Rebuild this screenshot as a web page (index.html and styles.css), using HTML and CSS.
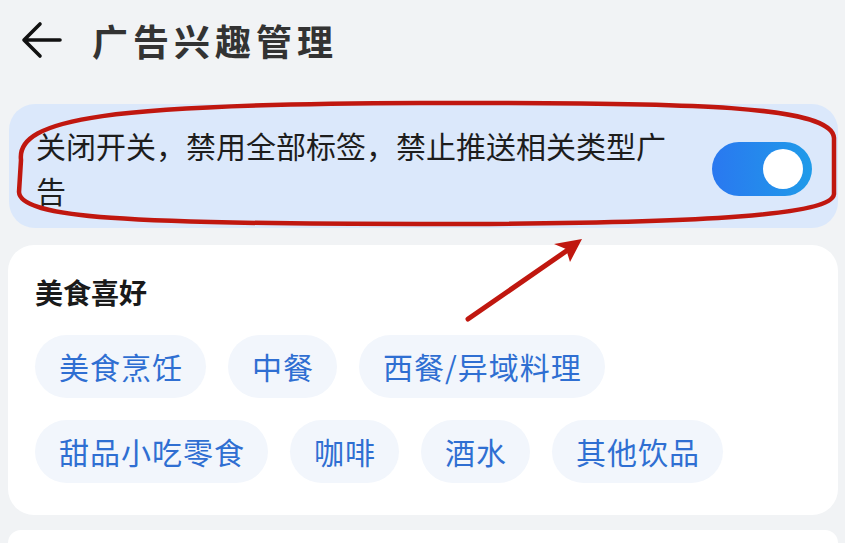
FILE: index.html
```html
<!DOCTYPE html>
<html lang="zh-CN">
    <head>
        <meta charset="utf-8">
        <title>广告兴趣管理</title>
        <link rel="stylesheet" href="styles.css">
    </head>
    <body>
        <header class="top-bar">
            <svg class="back" width="44" height="40" viewBox="0 0 44 40">
                <path d="M40 20 H5 M20 4 L4 20 L20 36" fill="none" stroke="#111" stroke-width="3.6" stroke-linecap="round" stroke-linejoin="round"/>
            </svg>
            <h1 class="title">广告兴趣管理</h1>
        </header>
        <main class="main">
            <div class="switch-card">
                <p class="switch-text">关闭开关，禁用全部标签，禁止推送相关类型广告</p>
                <div class="toggle"><div class="knob"></div></div>
            </div>
            <section class="tag-card">
                <h2 class="tag-title">美食喜好</h2>
                <ul class="chips">
                    <li>美食烹饪</li>
                    <li>中餐</li>
                    <li>西餐/异域料理</li>
                    <li>甜品小吃零食</li>
                    <li>咖啡</li>
                    <li>酒水</li>
                    <li>其他饮品</li>
                </ul>
            </section>
            <section class="tag-card next"></section>
        </main>
        <svg class="marks" width="845" height="543" viewBox="0 0 845 543">
            <path d="M21 160 C16 118, 110 104, 420 103 C700 102, 832 106, 834 138 L834 194 C832 214, 720 224, 420 224 C130 224, 20 218, 19 192 Z" fill="none" stroke="#c0170f" stroke-width="4.5"/>
            <path d="M468 319 L575 245" stroke="#c0170f" stroke-width="5" stroke-linecap="round"/>
            <path d="M582 239 L554 244 L566 249 L570 262 Z" fill="#c0170f"/>
        </svg>
    </body>
</html>
```

FILE: styles.css
```css
body {
    margin: 0;
    background: #f1f3f5;
    font-family: "Noto Sans CJK SC", "Noto Sans", sans-serif;
    color: #1d1d1d;
    height: 543px;
    overflow: hidden;
    position: relative;
}

.top-bar {
    display: flex;
    align-items: center;
    height: 80px;
    padding-left: 20px;
}

.back {
    margin-right: 28px;
}

.title {
    margin: 0;
    font-size: 36px;
    font-weight: 700;
    color: #333;
    letter-spacing: 5px;
}

.main {
    padding: 24px 7px 0 9px;
}

.switch-card {
    display: flex;
    align-items: center;
    background: #dbe8fb;
    border-radius: 26px;
    padding: 19px 26px 15px 27px;
}

.switch-text {
    margin: 0;
    flex: 1;
    font-size: 30px;
    line-height: 45px;
    padding-right: 40px;
}

.toggle {
    width: 100px;
    height: 54px;
    border-radius: 27px;
    background: linear-gradient(90deg, #2a78f0, #1f9be9);
    display: flex;
    align-items: center;
    justify-content: flex-end;
    padding-right: 9px;
    box-sizing: border-box;
    flex-shrink: 0;
    margin-top: 2px;
}

.knob {
    width: 40px;
    height: 40px;
    border-radius: 50%;
    background: #fff;
}

.tag-card {
    margin-top: 17px;
    background: #fff;
    border-radius: 26px;
    padding: 27px 20px 32px 27px;
    margin-left: -1px;
}

.tag-title {
    margin: 0 0 23px;
    font-size: 28px;
    line-height: 40px;
    font-weight: 700;
    color: #1a1a1a;
}

.chips {
    list-style: none;
    margin: 0;
    padding: 0;
    display: flex;
    flex-wrap: wrap;
    gap: 22px 22px;
}

.chips li {
    height: 63px;
    line-height: 63px;
    padding: 0 23px 0 24px;
    border-radius: 32px;
    background: #f2f6fc;
    color: #2f6fd2;
    font-size: 30px;
    letter-spacing: 1px;
}

.tag-card.next {
    height: 13px;
    margin-top: 15px;
    padding: 0;
    border-radius: 26px 26px 0 0;
}

.marks {
    position: absolute;
    left: 0;
    top: 0;
    pointer-events: none;
}
```
